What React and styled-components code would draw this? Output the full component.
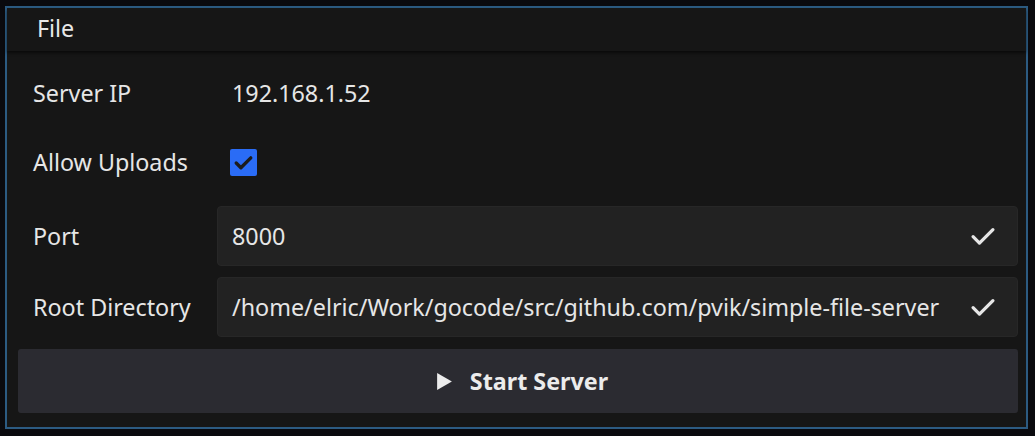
import React from "react";
import styled, { createGlobalStyle } from "styled-components";

const Global = createGlobalStyle`
  html, body { margin: 0; padding: 0; background: #0a0a0e; }
  body { font-family: "Noto Sans", "Open Sans", sans-serif; }
  #root { width: 1035px; height: 436px; overflow: hidden; }
`;

const Window = styled.div`
  box-sizing: border-box;
  margin: 6px 0 0 5px;
  width: 1023px;
  height: 423px;
  border: 2px solid #2c5b82;
  background: #161616;
  display: flex;
  flex-direction: column;
`;

const MenuBar = styled.div`
  height: 43px;
  display: flex;
  align-items: center;
  padding: 0 0 3px 30px;
  box-sizing: border-box;
  color: #e8e8e8;
  font-size: 23.3px;
  background: #161616;
  box-shadow: 0 2px 3px rgba(0, 0, 0, 0.55);
  position: relative;
  z-index: 1;
`;

const Content = styled.div`
  flex: 1;
  display: flex;
  flex-direction: column;
  padding: 11px 8px 13px 11px;
`;

const Row = styled.div`
  display: grid;
  grid-template-columns: 199px 1fr;
  align-items: center;
  height: ${(p) => p.$h}px;
  margin-top: ${(p) => p.$mt}px;
`;

const Label = styled.div`
  padding-left: 15px;
  color: #e6e6e6;
  font-size: 23.3px;
`;

const Value = styled.div`
  padding-left: 15px;
  color: #e6e6e6;
  font-size: 23.3px;
`;

const CheckBox = styled.div`
  margin-left: 13px;
  width: 27px;
  height: 27px;
  border-radius: 2px;
  background: #2a6cf6;
  display: flex;
  align-items: center;
  justify-content: center;
`;

const Entry = styled.div`
  box-sizing: border-box;
  height: 60px;
  display: flex;
  align-items: center;
  justify-content: space-between;
  padding: 0 17px 0 14px;
  background: #222222;
  border: 1px solid #272727;
  border-radius: 4px;
  color: #e6e6e6;
  font-size: 23.3px;
`;

const Button = styled.div`
  margin-top: 12px;
  height: 64px;
  background: #2b2b31;
  border-radius: 3px;
  display: flex;
  align-items: center;
  justify-content: center;
  gap: 17px;
  color: #ececec;
  font-size: 23.3px;
  font-weight: 700;
  padding-left: 8px;
`;

const Check = ({ color = "#e6e6e6", size = 34, w = 2.3 }) => (
  <svg width={size} height={size} viewBox="0 0 24 24" fill="none">
    <path d="M5 12.5l4.5 4.5L19 7.5" stroke={color} strokeWidth={w} strokeLinecap="round" strokeLinejoin="round" />
  </svg>
);

export default function App() {
  return (
    <>
      <Global />
      <Window>
        <MenuBar>File</MenuBar>
        <Content>
          <Row $h={62} $mt={0}>
            <Label>Server IP</Label>
            <Value>192.168.1.52</Value>
          </Row>
          <Row $h={54} $mt={11}>
            <Label>Allow Uploads</Label>
            <CheckBox>
              <Check color="#1c1c1c" size={25} w={3.2} />
            </CheckBox>
          </Row>
          <Row $h={60} $mt={17}>
            <Label>Port</Label>
            <Entry>
              <span>8000</span>
              <Check />
            </Entry>
          </Row>
          <Row $h={60} $mt={11}>
            <Label>Root Directory</Label>
            <Entry>
              <span>/home/elric/Work/gocode/src/github.com/pvik/simple-file-server</span>
              <Check />
            </Entry>
          </Row>
          <Button>
            <svg width="17" height="19" viewBox="0 0 16 18">
              <path d="M1 1 L15 9 L1 17 Z" fill="#ececec" />
            </svg>
            <span>Start Server</span>
          </Button>
        </Content>
      </Window>
    </>
  );
}
